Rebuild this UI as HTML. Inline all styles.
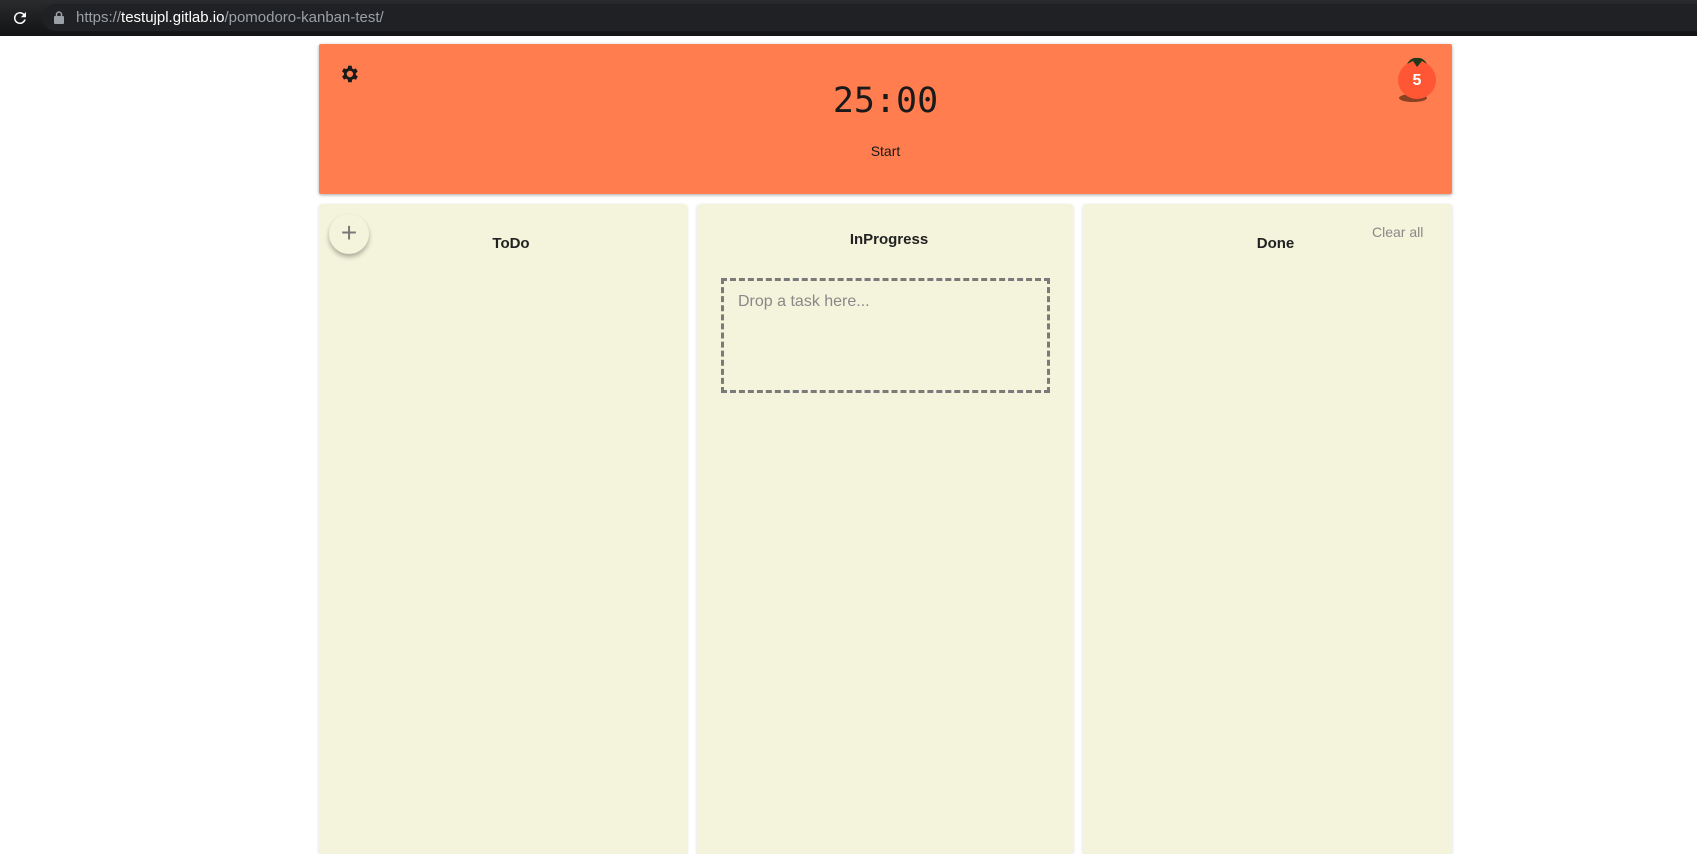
<!DOCTYPE html>
<html><head><meta charset="utf-8"><style>
*{margin:0;padding:0;box-sizing:border-box}
body{width:1697px;height:838px;background:#fff;font-family:"Liberation Sans",sans-serif;position:relative;overflow:hidden}
.bar{position:absolute;left:0;top:0;width:1697px;height:36px;background:linear-gradient(#2a2b2d,#121314);}
.url{position:absolute;left:42px;top:4px;width:1700px;height:27px;border-radius:14px;background:#202124}
.url span{position:absolute;left:34px;top:5px;font-size:15px;color:#9aa0a6}
.url b{font-weight:normal;color:#fff}
.timer{position:absolute;left:319px;top:44px;width:1133px;height:150px;background:#ff7d4f;box-shadow:0 1px 3px rgba(0,0,0,.35);border-radius:2px}
.col{position:absolute;top:204px;height:650px;background:#f4f4dc;box-shadow:0 1px 3px rgba(0,0,0,.15);border-radius:3px}
.t{position:absolute;left:0;right:0;text-align:center;font-weight:bold;font-size:15px;color:#222}
</style></head><body>
<div class="bar">
<svg style="position:absolute;left:11px;top:9px" width="18" height="18" viewBox="0 0 24 24"><path d="M17.6 6.4A8 8 0 1 0 19.7 14h-2.1a6 6 0 1 1-1.4-6.2L13 11h7V4z" fill="#fff"/></svg>
<div class="url"><svg style="position:absolute;left:12px;top:7px" width="10" height="13" viewBox="0 0 10 13"><rect x="0" y="5" width="10" height="8" rx="1" fill="#9aa0a6"/><path d="M2.5 5V3.5a2.5 2.5 0 0 1 5 0V5" stroke="#9aa0a6" stroke-width="1.5" fill="none"/></svg><span>https://<b>testujpl.gitlab.io</b>/pomodoro-kanban-test/</span></div>
</div>
<div class="timer">
<svg style="position:absolute;left:19px;top:19px" width="22" height="22" viewBox="0 0 24 24"><path fill="#1a1a1a" d="M19.4 13a7.5 7.5 0 0 0 0-2l2.1-1.6-2-3.5-2.5 1a7 7 0 0 0-1.7-1L15 3h-4l-.4 2.7a7 7 0 0 0-1.7 1l-2.5-1-2 3.5L6.6 11a7.5 7.5 0 0 0 0 2l-2.1 1.6 2 3.5 2.5-1a7 7 0 0 0 1.7 1L11 21h4l.4-2.7a7 7 0 0 0 1.7-1l2.5 1 2-3.5zM13 15.5a3.5 3.5 0 1 1 0-7 3.5 3.5 0 0 1 0 7z"/></svg>
<div style="position:absolute;left:0;right:0;top:37px;text-align:center;font-family:'DejaVu Sans Mono','Liberation Mono',monospace;font-size:35px;color:#1a1a1a">25:00</div>
<div style="position:absolute;left:0;right:0;top:99px;text-align:center;font-size:14px;color:#1a1a1a">Start</div>
<div style="position:absolute;left:1080px;top:50px;width:28px;height:8px;border-radius:50%;background:#5a2a10;opacity:.7"></div>
<div style="position:absolute;left:1079px;top:17px;width:38px;height:38px;border-radius:50%;background:#ff5733;color:#fff;font-weight:bold;font-size:16px;text-align:center;line-height:40px">5</div>
<svg style="position:absolute;left:1087px;top:12px" width="22" height="12" viewBox="0 0 22 12"><path d="M1 8 Q5 1 11 2 Q17 1 21 8 L16 5 L11 11 L7 5Z" fill="#1f3a1a"/></svg>
</div>
<div class="col" style="left:319px;width:368px">
<div style="position:absolute;left:10px;top:10px;width:40px;height:40px;border-radius:50%;background:#f4f4dc;box-shadow:0 3px 5px rgba(0,0,0,.3);text-align:center;line-height:38px;font-size:28px;color:#777">+</div>
<div class="t" style="top:31px;left:16px">ToDo</div></div>
<div class="col" style="left:697px;width:376px">
<div class="t" style="top:27px;left:8px">InProgress</div>
<div style="position:absolute;left:24px;top:74px;width:329px;height:115px;border:3px dashed #7a7a7a;padding:12px 14px;font-size:16px;color:#888">Drop a task here...</div></div>
<div class="col" style="left:1083px;width:369px">
<div class="t" style="top:31px;left:16px">Done</div>
<div style="position:absolute;left:289px;top:20px;font-size:14px;color:#888">Clear all</div></div>
</body></html>
